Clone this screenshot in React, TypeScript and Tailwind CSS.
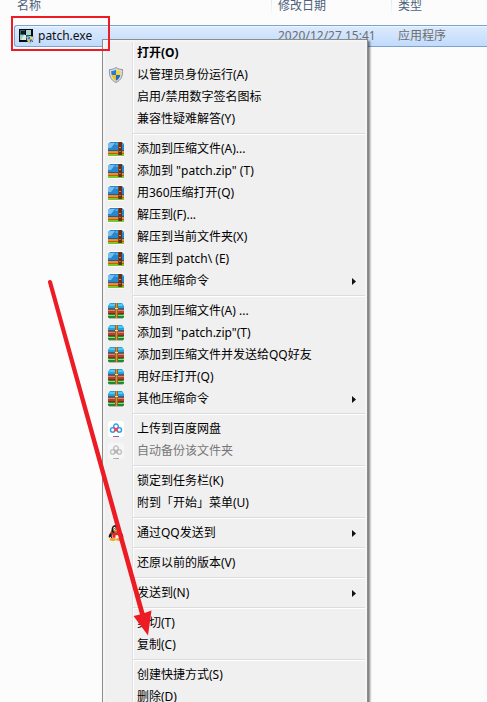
import React from "react";

function BlueArchiveIcon() {
  return (
    <svg width="16" height="16" viewBox="0 0 16 16" aria-hidden="true">
      <rect width="16" height="16" fill="#fbfbf8" />
      <path d="M2 1h12l2 2v6H0V3z" fill="#2687d0" />
      <path d="M1 2h6L3 7H0V3z" fill="#79bdeb" />
      <path d="M8 2h6l1 2H7z" fill="#52a8e4" />
      <rect y="9" width="16" height="1" fill="#155f9d" />
      <rect y="10" width="16" height="2" fill="#f58a1f" />
      <rect y="12" width="16" height="1" fill="#c25a12" />
      <rect y="13" width="16" height="2" fill="#77c72d" />
      <rect x="10" y="1" width="4" height="13" fill="#65311a" />
      <rect x="10" y="1" width="1" height="13" fill="#7d4526" />
      <rect x="11" y="6" width="2" height="1" fill="#c98f5c" />
      <rect x="11" y="10" width="2" height="1" fill="#b0713f" />
    </svg>
  );
}

function StripedArchiveIcon() {
  return (
    <svg width="16" height="16" viewBox="0 0 16 16" aria-hidden="true">
      <path d="M2 0h12l2 3v3H0V3z" fill="#22a5df" />
      <path d="M2 1h12l1 2H1z" fill="#56c9f3" />
      <rect y="5" width="16" height="1" fill="#0c6fa8" />
      <rect y="6" width="16" height="5" fill="#b5402e" />
      <rect y="7" width="16" height="1" fill="#d98a62" />
      <rect y="10" width="16" height="1" fill="#7a3122" />
      <rect y="11" width="16" height="4" rx="1" fill="#228636" />
      <rect y="12" width="16" height="1" fill="#95dd61" />
      <rect x="1" y="15" width="14" height="1" fill="#b9bcb5" />
      <rect x="7" y="0" width="3" height="15" fill="#9b6221" />
      <rect x="8" y="0" width="1" height="15" fill="#d19642" />
      <rect x="7" y="5" width="3" height="1" fill="#ffdd68" />
    </svg>
  );
}

function Shield() {
  return (
    <>
      <path d="M8 .5C6 2 3.800 2.600 1.500 2.500 1 8.500 2.500 13 8 15.500 13.500 13 15 8.500 14.500 2.500 12.200 2.600 10 2 8 .5z" fill="#d9dde0" stroke="#8b9298" />
      <path d="M8 2.500C6.500 3.500 5 4 3.200 4c0 1.600.1 2.800.5 4H8z" fill="#1f7fd6" />
      <path d="M8 2.500C9.500 3.500 11 4 12.800 4c0 1.600-.1 2.800-.5 4H8z" fill="#f7d23c" />
      <path d="M3.700 8H8v5.700C5.700 12.500 4.300 10.800 3.700 8z" fill="#f3c01e" />
      <path d="M12.300 8H8v5.700c2.300-1.200 3.700-2.900 4.300-5.700z" fill="#1a6cc4" />
    </>
  );
}

function ShieldIcon() {
  return (
    <svg width="16" height="16" viewBox="0 0 16 16" aria-hidden="true">
      <Shield />
    </svg>
  );
}

function CloudDiskIcon({ muted = false }: { muted?: boolean }) {
  const blue = muted ? "#c4c4c4" : "#27a5f2";
  const red = muted ? "#b5b5b5" : "#f3425d";
  return (
    <svg width="16" height="16" viewBox="0 0 16 16" aria-hidden="true">
      <rect width="16" height="16" rx="3" fill={muted ? "#f6f6f6" : "#ffffff"} />
      <g fill="none" strokeWidth="1.500">
        <path d="M5.700 6.200a2.400 2.400 0 1 1 4.600 0" stroke={blue} />
        <circle cx="4.700" cy="9" r="2.200" stroke={blue} />
        <circle cx="11.300" cy="9" r="2.200" stroke={blue} />
        <path d="M5.700 6.200q.8 1.600 2.300 1.600t2.300-1.600M6.200 10.500L8 7.800l1.800 2.700" stroke={red} />
      </g>
      <rect x="5" y="15" width="3" height="1" fill={red} />
      <rect x="8" y="15" width="3" height="1" fill={muted ? "#a9a9a9" : "#3778ee"} />
    </svg>
  );
}

function PenguinIcon() {
  return (
    <svg width="16" height="16" viewBox="0 0 16 16" aria-hidden="true">
      <path d="M8 0C5 0 3.600 2 3.600 4.600L3.200 7C1.600 8.500.2 11 .8 12.500c.6.5 1.400-.4 1.800-1 .2 1 .7 1.700 1.400 2.300h8c.7-.6 1.200-1.300 1.400-2.300.5.700 1.300 1.400 1.800 1 .6-1.500-.8-4-2.400-5.500l-.4-2.400C12.400 2 11 0 8 0z" fill="#171717" />
      <ellipse cx="8" cy="11" rx="4.300" ry="3.600" fill="#fff" />
      <ellipse cx="6.500" cy="3.400" rx="1.200" ry="1.600" fill="#fff" />
      <ellipse cx="9.500" cy="3.400" rx="1.200" ry="1.600" fill="#fff" />
      <circle cx="6.800" cy="3.600" r=".5" fill="#111" />
      <circle cx="9.200" cy="3.600" r=".5" fill="#111" />
      <ellipse cx="8" cy="5.800" rx="2.800" ry="1" fill="#f6a81c" />
      <path d="M2.800 6.800q5.200 2.400 10.400 0l.5 2.400Q10 10.600 7.500 10.200v2.600H4.400V9.800L2.400 9z" fill="#e3261f" />
      <ellipse cx="4.800" cy="14.500" rx="3.200" ry="1.400" fill="#f2a31d" />
      <ellipse cx="11.200" cy="14.500" rx="3.200" ry="1.400" fill="#f2a31d" />
    </svg>
  );
}

function ProgramIcon() {
  return (
    <svg width="16" height="16" viewBox="0 0 16 16" aria-hidden="true">
      <rect x="1" y="1" width="14" height="13" fill="#050b0b" />
      <path d="M2 2h5v5H2z" fill="#3d6a68" />
      <path d="M3 3h4v3H3z" fill="#0d1c1c" />
      <rect x="8" y="2" width="5" height="5" fill="#a6d8cf" />
      <rect x="2" y="7" width="6" height="5" fill="#9bcac3" />
      <path d="M3 12l3-5h2v5z" fill="#d5eeea" />
      <rect x="8" y="7" width="3" height="3" fill="#20605b" />
      <svg x="8" y="7" width="8" height="9" viewBox="0 0 16 16">
        <Shield />
      </svg>
    </svg>
  );
}

type Item = {
  label: string;
  icon?: React.ReactNode;
  bold?: boolean;
  disabled?: boolean;
  submenu?: boolean;
};

const groups: Item[][] = [
  [
    { label: "打开(O)", bold: true },
    { label: "以管理员身份运行(A)", icon: <ShieldIcon /> },
    { label: "启用/禁用数字签名图标" },
    { label: "兼容性疑难解答(Y)" },
  ],
  [
    { label: "添加到压缩文件(A)...", icon: <BlueArchiveIcon /> },
    { label: '添加到 "patch.zip" (T)', icon: <BlueArchiveIcon /> },
    { label: "用360压缩打开(Q)", icon: <BlueArchiveIcon /> },
    { label: "解压到(F)...", icon: <BlueArchiveIcon /> },
    { label: "解压到当前文件夹(X)", icon: <BlueArchiveIcon /> },
    { label: "解压到 patch\\ (E)", icon: <BlueArchiveIcon /> },
    { label: "其他压缩命令", icon: <BlueArchiveIcon />, submenu: true },
  ],
  [
    { label: "添加到压缩文件(A) ...", icon: <StripedArchiveIcon /> },
    { label: '添加到 "patch.zip"(T)', icon: <StripedArchiveIcon /> },
    { label: "添加到压缩文件并发送给QQ好友", icon: <StripedArchiveIcon /> },
    { label: "用好压打开(Q)", icon: <StripedArchiveIcon /> },
    { label: "其他压缩命令", icon: <StripedArchiveIcon />, submenu: true },
  ],
  [
    { label: "上传到百度网盘", icon: <CloudDiskIcon /> },
    { label: "自动备份该文件夹", icon: <CloudDiskIcon muted />, disabled: true },
  ],
  [{ label: "锁定到任务栏(K)" }, { label: "附到「开始」菜单(U)" }],
  [{ label: "通过QQ发送到", icon: <PenguinIcon />, submenu: true }],
  [{ label: "还原以前的版本(V)" }],
  [{ label: "发送到(N)", submenu: true }],
  [{ label: "剪切(T)" }, { label: "复制(C)" }],
  [{ label: "创建快捷方式(S)" }, { label: "删除(D)" }],
];

function MenuRow({ item }: { item: Item }) {
  return (
    <button
      type="button"
      role="menuitem"
      disabled={item.disabled}
      className={`flex h-[22px] w-full items-center text-left whitespace-nowrap ${
        item.disabled ? "text-[#777777]" : "text-black"
      } ${item.bold ? "font-bold" : ""}`}
    >
      <span className="flex w-8 shrink-0 pl-[3px]">{item.icon}</span>
      <span className="flex-1">{item.label}</span>
      {item.submenu && (
        <svg className="mr-[9px]" width="4" height="7" viewBox="0 0 4 7" aria-hidden="true">
          <path d="M0 0l4 3.500L0 7z" fill="#111" />
        </svg>
      )}
    </button>
  );
}

function ContextMenu() {
  return (
    <div
      role="menu"
      className="absolute top-[39px] left-[102px] w-[266px] border border-[#8c8c8c] bg-[#f5f5f5] p-[2px] shadow-[2px_2px_2px_rgba(0,0,0,0.5)]"
    >
      <div className="bg-[linear-gradient(to_right,#f0f0f0_27px,#e0e0e0_27px,#e0e0e0_28px,#ffffff_28px,#ffffff_29px,#f0f0f0_29px)]">
        {groups.map((group, index) => (
          <React.Fragment key={index}>
            {index > 0 && (
              <div role="separator" className="py-[3px] pl-7">
                <div className="h-[2px] border-t border-[#dcdcdc] bg-white" />
              </div>
            )}
            {group.map((item) => (
              <MenuRow key={item.label} item={item} />
            ))}
          </React.Fragment>
        ))}
      </div>
    </div>
  );
}

const headCell =
  "h-[25px] p-0 align-top text-left font-normal leading-3 text-[#4c607a]";
const divider =
  "pl-[7px] bg-[linear-gradient(to_bottom,#dfe9f4,#fcfcfc_16px)] bg-[length:1px_100%] bg-no-repeat";
const rowCell =
  "h-[22px] border-y border-[#7da2ce] bg-linear-to-b from-[#dcebfd] to-[#c1dbfc] p-0 shadow-[inset_0_1px_0_#edf5ff]";

function FileList() {
  return (
    <table className="ml-[14px] w-[calc(100%-14px)] table-fixed border-separate border-spacing-0">
      <thead>
        <tr>
          <th className={`${headCell} w-[257px] pl-[3px]`}>名称</th>
          <th className={`${headCell} ${divider} w-[120px]`}>修改日期</th>
          <th className={`${headCell} ${divider}`}>类型</th>
        </tr>
      </thead>
      <tbody>
        <tr className="leading-4 text-[#6d6d6d]">
          <td className={`${rowCell} rounded-l-[3px] border-l text-[#111111]`}>
            <div className="flex items-center gap-1 pl-[3px]">
              <ProgramIcon />
              <span>patch.exe</span>
            </div>
          </td>
          <td className={`${rowCell} pl-[7px] whitespace-nowrap`}>2020/12/27 15:41</td>
          <td className={`${rowCell} pl-[7px] whitespace-nowrap`}>应用程序</td>
        </tr>
      </tbody>
    </table>
  );
}

export default function App() {
  return (
    <main className="relative h-screen overflow-hidden bg-[#fcfcfc] font-['Noto_Sans','Noto_Sans_CJK_SC',sans-serif] text-[12px] leading-4">
      <FileList />
      <ContextMenu />
      <div className="pointer-events-none absolute top-4 left-[11px] h-[35px] w-[99px] border-2 border-[#ed1c24]" />
      <svg
        className="pointer-events-none absolute top-[278px] left-[46px]"
        width="110"
        height="360"
        viewBox="46 278 110 360"
        aria-hidden="true"
      >
        <path d="M48 282.500a2 2 0 0 1 4-1L144.500 613l7-2.500-3.500 25-14.500-19.500 6.500-1.500z" fill="#ed1c24" />
      </svg>
    </main>
  );
}
